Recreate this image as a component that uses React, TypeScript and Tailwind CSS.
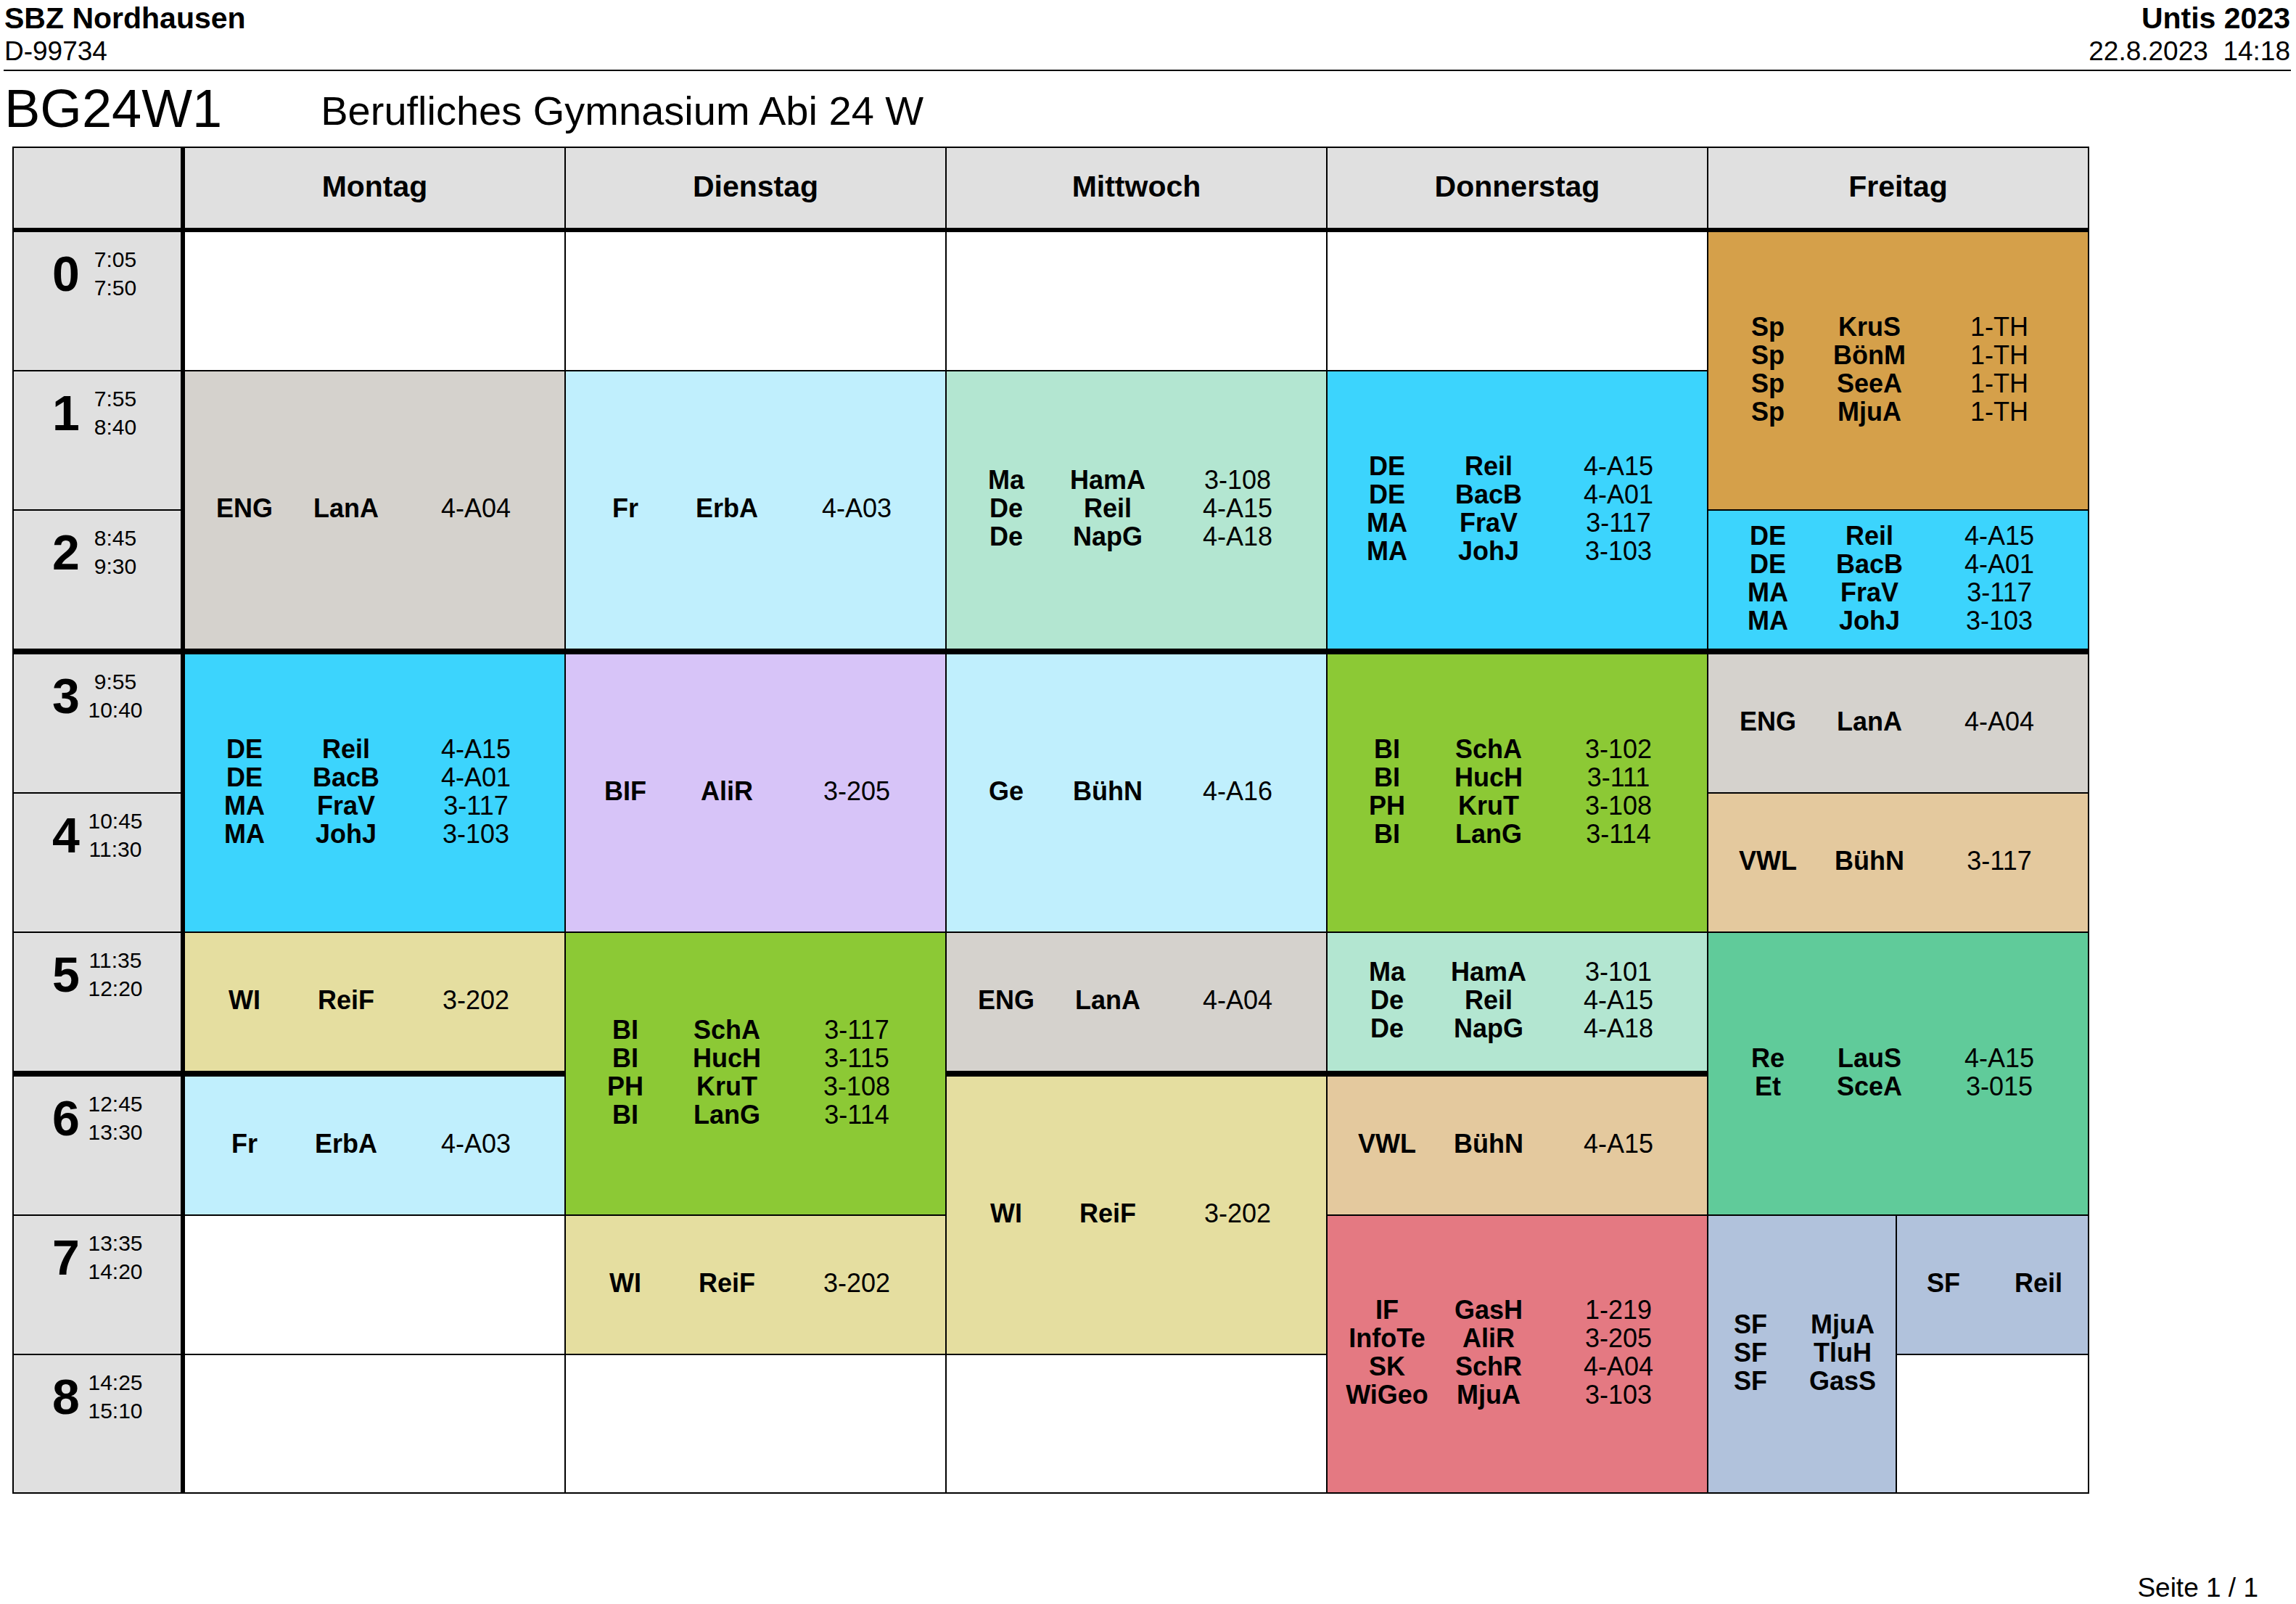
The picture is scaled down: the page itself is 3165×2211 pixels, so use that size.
import { Fragment, type ReactNode } from "react";

type Row = [string, string, string?];

const COLS3 = "grid-cols-[164px_116px_242px]";

const C = {
  eng: "bg-[#d5d2cd]",
  lightCyan: "bg-[#c0effd]",
  mint: "bg-[#b3e6d1]",
  cyan: "bg-[#3cd4fd]",
  orange: "bg-[#d5a04a]",
  lavender: "bg-[#d7c4f8]",
  green: "bg-[#8cc935]",
  tan: "bg-[#e4c99e]",
  khaki: "bg-[#e5dea0]",
  teal: "bg-[#60cb9a]",
  red: "bg-[#e47982]",
  blue: "bg-[#b1c2dc]",
};

const DE_BLOCK: Row[] = [
  ["DE", "Reil", "4-A15"],
  ["DE", "BacB", "4-A01"],
  ["MA", "FraV", "3-117"],
  ["MA", "JohJ", "3-103"],
];

const periods = [
  { n: "0", from: "7:05", to: "7:50", pos: "row-start-2" },
  { n: "1", from: "7:55", to: "8:40", pos: "row-start-3" },
  { n: "2", from: "8:45", to: "9:30", pos: "row-start-4", thick: true },
  { n: "3", from: "9:55", to: "10:40", pos: "row-start-5" },
  { n: "4", from: "10:45", to: "11:30", pos: "row-start-6" },
  { n: "5", from: "11:35", to: "12:20", pos: "row-start-7", thick: true },
  { n: "6", from: "12:45", to: "13:30", pos: "row-start-8" },
  { n: "7", from: "13:35", to: "14:20", pos: "row-start-9" },
  { n: "8", from: "14:25", to: "15:10", pos: "row-start-10" },
];

const days = [
  { name: "Montag", pos: "col-start-2" },
  { name: "Dienstag", pos: "col-start-3" },
  { name: "Mittwoch", pos: "col-start-4" },
  { name: "Donnerstag", pos: "col-start-5" },
  { name: "Freitag", pos: "col-start-6 col-span-2" },
];

type Block = { pos: string; bg?: string; thick?: boolean; rows?: Row[]; cols?: string };

const blocks: Block[] = [
  // Montag
  { pos: "col-start-2 row-start-2" },
  { pos: "col-start-2 row-start-3 row-span-2", bg: C.eng, thick: true, rows: [["ENG", "LanA", "4-A04"]] },
  { pos: "col-start-2 row-start-5 row-span-2", bg: C.cyan, rows: DE_BLOCK },
  { pos: "col-start-2 row-start-7", bg: C.khaki, thick: true, rows: [["WI", "ReiF", "3-202"]] },
  { pos: "col-start-2 row-start-8", bg: C.lightCyan, rows: [["Fr", "ErbA", "4-A03"]] },
  { pos: "col-start-2 row-start-9" },
  { pos: "col-start-2 row-start-10" },
  // Dienstag
  { pos: "col-start-3 row-start-2" },
  { pos: "col-start-3 row-start-3 row-span-2", bg: C.lightCyan, thick: true, rows: [["Fr", "ErbA", "4-A03"]] },
  { pos: "col-start-3 row-start-5 row-span-2", bg: C.lavender, rows: [["BIF", "AliR", "3-205"]] },
  {
    pos: "col-start-3 row-start-7 row-span-2",
    bg: C.green,
    rows: [
      ["BI", "SchA", "3-117"],
      ["BI", "HucH", "3-115"],
      ["PH", "KruT", "3-108"],
      ["BI", "LanG", "3-114"],
    ],
  },
  { pos: "col-start-3 row-start-9", bg: C.khaki, rows: [["WI", "ReiF", "3-202"]] },
  { pos: "col-start-3 row-start-10" },
  // Mittwoch
  { pos: "col-start-4 row-start-2" },
  {
    pos: "col-start-4 row-start-3 row-span-2",
    bg: C.mint,
    thick: true,
    rows: [
      ["Ma", "HamA", "3-108"],
      ["De", "Reil", "4-A15"],
      ["De", "NapG", "4-A18"],
    ],
  },
  { pos: "col-start-4 row-start-5 row-span-2", bg: C.lightCyan, rows: [["Ge", "BühN", "4-A16"]] },
  { pos: "col-start-4 row-start-7", bg: C.eng, thick: true, rows: [["ENG", "LanA", "4-A04"]] },
  { pos: "col-start-4 row-start-8 row-span-2", bg: C.khaki, rows: [["WI", "ReiF", "3-202"]] },
  { pos: "col-start-4 row-start-10" },
  // Donnerstag
  { pos: "col-start-5 row-start-2" },
  { pos: "col-start-5 row-start-3 row-span-2", bg: C.cyan, thick: true, rows: DE_BLOCK },
  {
    pos: "col-start-5 row-start-5 row-span-2",
    bg: C.green,
    rows: [
      ["BI", "SchA", "3-102"],
      ["BI", "HucH", "3-111"],
      ["PH", "KruT", "3-108"],
      ["BI", "LanG", "3-114"],
    ],
  },
  {
    pos: "col-start-5 row-start-7",
    bg: C.mint,
    thick: true,
    rows: [
      ["Ma", "HamA", "3-101"],
      ["De", "Reil", "4-A15"],
      ["De", "NapG", "4-A18"],
    ],
  },
  { pos: "col-start-5 row-start-8", bg: C.tan, rows: [["VWL", "BühN", "4-A15"]] },
  {
    pos: "col-start-5 row-start-9 row-span-2",
    bg: C.red,
    rows: [
      ["IF", "GasH", "1-219"],
      ["InfoTe", "AliR", "3-205"],
      ["SK", "SchR", "4-A04"],
      ["WiGeo", "MjuA", "3-103"],
    ],
  },
  // Freitag
  {
    pos: "col-start-6 col-span-2 row-start-2 row-span-2",
    bg: C.orange,
    rows: [
      ["Sp", "KruS", "1-TH"],
      ["Sp", "BönM", "1-TH"],
      ["Sp", "SeeA", "1-TH"],
      ["Sp", "MjuA", "1-TH"],
    ],
  },
  { pos: "col-start-6 col-span-2 row-start-4", bg: C.cyan, thick: true, rows: DE_BLOCK },
  { pos: "col-start-6 col-span-2 row-start-5", bg: C.eng, rows: [["ENG", "LanA", "4-A04"]] },
  { pos: "col-start-6 col-span-2 row-start-6", bg: C.tan, rows: [["VWL", "BühN", "3-117"]] },
  {
    pos: "col-start-6 col-span-2 row-start-7 row-span-2",
    bg: C.teal,
    rows: [
      ["Re", "LauS", "4-A15"],
      ["Et", "SceA", "3-015"],
    ],
  },
  {
    pos: "col-start-6 row-start-9 row-span-2",
    bg: C.blue,
    cols: "grid-cols-[116px_138px]",
    rows: [
      ["SF", "MjuA"],
      ["SF", "TluH"],
      ["SF", "GasS"],
    ],
  },
  { pos: "col-start-7 row-start-9", bg: C.blue, cols: "grid-cols-[128px_134px]", rows: [["SF", "Reil"]] },
  { pos: "col-start-7 row-start-10" },
];

function Lessons({ rows, cols = COLS3 }: { rows: Row[]; cols?: string }) {
  return (
    <div className={`grid ${cols} text-[36px] leading-[39px]`}>
      {rows.map((r, i) => (
        <Fragment key={i}>
          <span className="text-center font-bold whitespace-nowrap">{r[0]}</span>
          <span className="text-center font-bold whitespace-nowrap">{r[1]}</span>
          {r[2] !== undefined && <span className="text-center whitespace-nowrap">{r[2]}</span>}
        </Fragment>
      ))}
    </div>
  );
}

function Cell({ pos, bg = "bg-white", thick, children }: { pos: string; bg?: string; thick?: boolean; children?: ReactNode }) {
  return (
    <div className={`${pos} ${bg} flex items-center pb-[5px] ${thick ? "border-b-[6px] border-black" : ""}`}>
      {children}
    </div>
  );
}

function Timetable() {
  return (
    <div className="ml-[17px] mt-[12px] w-fit bg-black p-[2px]">
      <div className="grid grid-cols-[234px_523px_523px_523px_523px_258px_263px] grid-rows-[114px_190px_190px_196px_190px_190px_196px_190px_190px_189px] gap-[2px]">
        <div className="col-start-1 row-start-1 border-r-[4px] border-b-[4px] border-black bg-[#e0e0e0]" />
        {days.map((d) => (
          <div
            key={d.name}
            className={`${d.pos} row-start-1 flex items-center justify-center border-b-[4px] border-black bg-[#e0e0e0] pb-[2px] text-[41px] font-bold`}
          >
            {d.name}
          </div>
        ))}

        {periods.map((p) => (
          <div
            key={p.n}
            className={`${p.pos} col-start-1 flex items-start border-r-[4px] border-black bg-[#e0e0e0] pt-[18px] ${p.thick ? "border-b-[6px]" : ""}`}
          >
            <div className="flex items-center">
              <span className="ml-[51px] w-[42px] text-center text-[68px] leading-[68px] font-bold">{p.n}</span>
              <div className="w-[94px] text-center text-[30px] leading-[39px]">
                <div>{p.from}</div>
                <div>{p.to}</div>
              </div>
            </div>
          </div>
        ))}

        {blocks.map((b, i) => (
          <Cell key={i} pos={b.pos} bg={b.bg} thick={b.thick}>
            {b.rows && <Lessons rows={b.rows} cols={b.cols} />}
          </Cell>
        ))}
      </div>
    </div>
  );
}

export default function App() {
  return (
    <div className="flex h-[2211px] w-[3165px] flex-col bg-white font-['Liberation_Sans',Arial,sans-serif] text-black">
      <header className="flex justify-between pl-[6px] pr-[8px] pt-[3px]">
        <div>
          <div className="text-[41px] leading-[44px] font-bold">SBZ Nordhausen</div>
          <div className="mt-[4px] text-[37px] leading-[40px]">D-99734</div>
        </div>
        <div className="text-right">
          <div className="text-[41px] leading-[44px] font-bold">Untis 2023</div>
          <div className="mt-[4px] whitespace-pre text-[37px] leading-[40px]">22.8.2023  14:18</div>
        </div>
      </header>
      <div className="ml-[5px] mr-[7px] mt-[5px] h-[2px] bg-black" />

      <div className="mt-[12px] flex items-start">
        <div className="ml-[6px] text-[74px] leading-[80px]">BG24W1</div>
        <div className="ml-[136px] mt-[13px] text-[56px] leading-[60px]">Berufliches Gymnasium Abi 24 W</div>
      </div>

      <Timetable />

      <div className="mr-[52px] mt-[110px] text-right text-[37px] leading-[40px]">Seite 1 / 1</div>
    </div>
  );
}
